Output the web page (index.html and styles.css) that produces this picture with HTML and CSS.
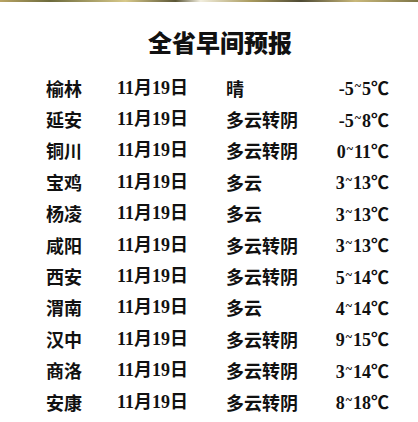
FILE: index.html
```html
<!DOCTYPE html>
<html lang="zh">
<head>
<meta charset="utf-8">
<title>全省早间预报</title>
<link rel="stylesheet" href="styles.css">
</head>
<body>
<div class="topbar"></div>
<h1 class="title">全省早间预报</h1>
<ul class="forecast">
  <li class="row"><span class="city">榆林</span><span class="date">11月19日</span><span class="weather">晴</span><span class="temp">-5<span class="tilde">~</span>5℃</span></li>
  <li class="row"><span class="city">延安</span><span class="date">11月19日</span><span class="weather">多云转阴</span><span class="temp">-5<span class="tilde">~</span>8℃</span></li>
  <li class="row"><span class="city">铜川</span><span class="date">11月19日</span><span class="weather">多云转阴</span><span class="temp">0<span class="tilde">~</span>11℃</span></li>
  <li class="row"><span class="city">宝鸡</span><span class="date">11月19日</span><span class="weather">多云</span><span class="temp">3<span class="tilde">~</span>13℃</span></li>
  <li class="row"><span class="city">杨凌</span><span class="date">11月19日</span><span class="weather">多云</span><span class="temp">3<span class="tilde">~</span>13℃</span></li>
  <li class="row"><span class="city">咸阳</span><span class="date">11月19日</span><span class="weather">多云转阴</span><span class="temp">3<span class="tilde">~</span>13℃</span></li>
  <li class="row"><span class="city">西安</span><span class="date">11月19日</span><span class="weather">多云转阴</span><span class="temp">5<span class="tilde">~</span>14℃</span></li>
  <li class="row"><span class="city">渭南</span><span class="date">11月19日</span><span class="weather">多云</span><span class="temp">4<span class="tilde">~</span>14℃</span></li>
  <li class="row"><span class="city">汉中</span><span class="date">11月19日</span><span class="weather">多云转阴</span><span class="temp">9<span class="tilde">~</span>15℃</span></li>
  <li class="row"><span class="city">商洛</span><span class="date">11月19日</span><span class="weather">多云转阴</span><span class="temp">3<span class="tilde">~</span>14℃</span></li>
  <li class="row"><span class="city">安康</span><span class="date">11月19日</span><span class="weather">多云转阴</span><span class="temp">8<span class="tilde">~</span>18℃</span></li>
</ul>
</body>
</html>
```

FILE: styles.css
```css
html, body {
  margin: 0;
  padding: 0;
  background: #fff;
}
body {
  width: 418px;
  height: 422px;
  overflow: hidden;
  color: #111;
  font-family: "Liberation Serif", "Noto Sans CJK SC", serif;
  font-weight: bold;
}
.topbar {
  height: 2px;
  background: linear-gradient(90deg, #b9a464 0%, #6c6a3c 12%, #d8c98a 30%, #5b5636 42%, #f2eede 48%, #a99a5e 60%, #4e4a34 72%, #c9b87a 85%, #7d7447 100%);
}
.title {
  margin: 25px 0 0;
  padding-left: 22px;
  font-family: "Noto Sans CJK SC", sans-serif;
  font-size: 24px;
  line-height: 30px;
  font-weight: 900;
  text-align: center;
}
.forecast {
  list-style: none;
  margin: 15px 0 0;
  padding: 0 29px 0 46px;
}
.row {
  display: grid;
  grid-template-columns: 71px 109px 1fr auto;
  height: 31.4px;
  align-items: center;
  font-size: 18px;
  line-height: 22px;
}
.city, .weather {
  font-family: "Noto Sans CJK SC", sans-serif;
  font-weight: bold;
}
.temp {
  text-align: right;
}
.tilde {
  display: inline-block;
  font-size: 12px;
  vertical-align: 5px;
  margin: 0 1px;
}
```
